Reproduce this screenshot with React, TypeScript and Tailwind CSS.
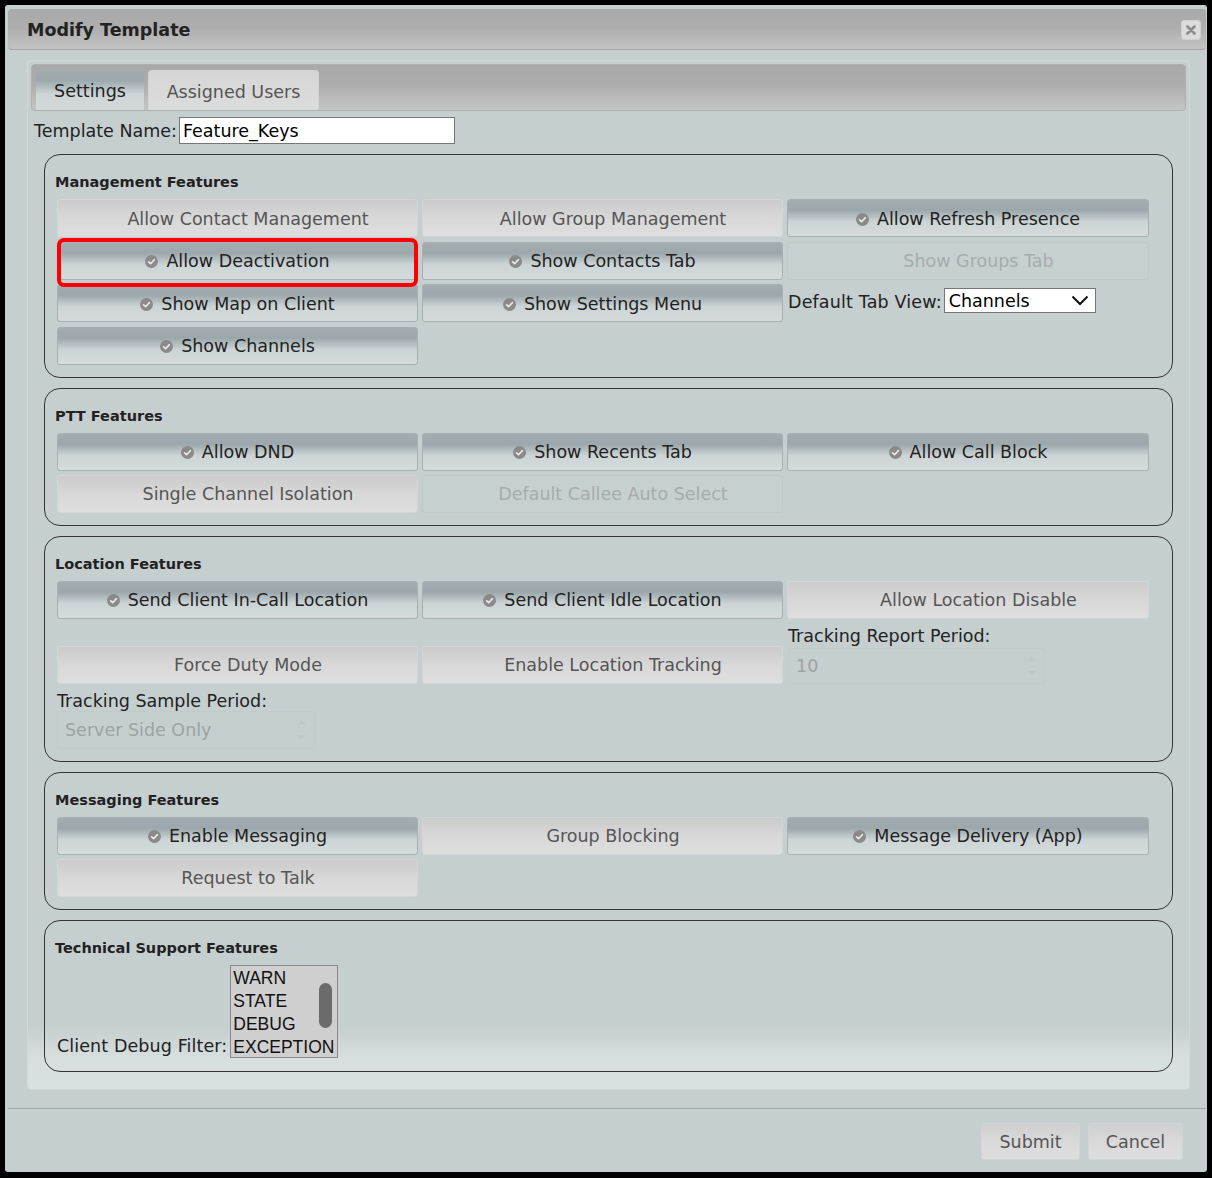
type Kind = 'on' | 'off' | 'disabled';

interface Feature {
    label: string;
    kind: Kind;
}

const FONT = "font-['DejaVu_Sans',Verdana,sans-serif]";

function CheckDot({ hidden }: { hidden?: boolean }) {
    return (
        <svg width="13" height="13" viewBox="0 0 13 13" className={`mr-[8px] shrink-0 ${hidden ? 'invisible' : ''}`}>
            <circle cx="6.5" cy="6.5" r="6.5" fill="#8a8a8a" />
            <path d="M3.6 6.8 L5.6 8.7 L9.4 4.6" stroke="#e8e8e8" strokeWidth="1.6" fill="none" strokeLinecap="round" strokeLinejoin="round" />
        </svg>
    );
}

function FeatureButton({ label, kind }: Feature) {
    const styles: Record<Kind, string> = {
        on: 'border-[#a7b0b2] bg-[linear-gradient(to_bottom,#a4aeb1_0%,#9ba7ab_28%,#ccd4d5_60%,#d5dbdc_100%)] text-[#222]',
        off: 'border-[#d2d6d6] bg-[linear-gradient(to_bottom,#cbcbcb_0%,#d9d9d9_55%,#dedede_100%)] text-[#555]',
        disabled: 'border-[#c0c9ca] bg-[#c7d0d1] text-[#a5acad]',
    };
    return (
        <div className={`h-[38px] rounded-[3px] border flex items-center justify-center pt-[2px] text-[17.5px] ${styles[kind]}`}>
            <CheckDot hidden={kind !== 'on'} />
            <span>{label}</span>
        </div>
    );
}

function Fieldset({ title, children }: { title: string; children: React.ReactNode }) {
    return (
        <div className="border border-[#333] rounded-[16px] pl-[12px] pt-[17px] pb-[12px]">
            <div className="text-[14.5px] leading-[20px] font-bold text-[#222] -ml-[2px] mb-[7px]">{title}</div>
            {children}
        </div>
    );
}

function Grid({ children, className = '' }: { children: React.ReactNode; className?: string }) {
    return <div className={`grid grid-cols-[361px_361px_362px] gap-x-[4px] ${className}`}>{children}</div>;
}

function Spinner({ value, width }: { value: string; width: string }) {
    return (
        <div className={`${width} h-full border border-[#c2cbcc] rounded-[2px] flex items-center justify-between pl-[7px] pr-[8px] text-[17.5px] text-[#9ca3a4]`}>
            <span className="pt-[2px]">{value}</span>
            <div className="flex flex-col gap-[10px]">
                <svg width="9" height="5" viewBox="0 0 9 5"><path d="M0 5 L4.5 0 L9 5Z" fill="#bfc7c8" /></svg>
                <svg width="9" height="5" viewBox="0 0 9 5"><path d="M0 0 L4.5 5 L9 0Z" fill="#bfc7c8" /></svg>
            </div>
        </div>
    );
}

export default function App() {
    const management: Feature[] = [
        { label: 'Allow Contact Management', kind: 'off' },
        { label: 'Allow Group Management', kind: 'off' },
        { label: 'Allow Refresh Presence', kind: 'on' },
    ];

    return (
        <div className={`w-[1212px] h-[1178px] bg-black pt-[5px] pl-[5px] pr-[5px] pb-[6px] ${FONT}`}>
            <div className="h-full bg-[#c6cfd0] rounded-[3px] flex flex-col">
                {/* Title bar */}
                <div className="ml-[3px] mr-[1px] mt-[4px] h-[41px] rounded-[4px] border-b border-[#a3a3a3] bg-[linear-gradient(to_bottom,#a9a9a9_0%,#adadad_45%,#c4c4c4_100%)] flex items-center justify-between pl-[19px] pr-[5px]">
                    <span className="pt-[3px] text-[17.5px] font-bold text-[#222]">Modify Template</span>
                    <div className="w-[20px] h-[20px] mt-[1px] rounded-[3px] border border-[#cfcfcf] bg-[#dcdcdc] flex items-center justify-center">
                        <svg width="10" height="10" viewBox="0 0 10 10">
                            <path d="M1.5 1.5 L8.5 8.5 M8.5 1.5 L1.5 8.5" stroke="#8a8a8a" strokeWidth="2.6" strokeLinecap="round" />
                        </svg>
                    </div>
                </div>

                {/* Panel */}
                <div className="ml-[22px] mr-[17px] mt-[10px] border border-[#d0d8d8] rounded-[4px] p-[3px] bg-[linear-gradient(to_bottom,#c6cfd0_0%,#c6cfd0_94%,#d7dede_97%,#d9e0e0_100%)]">
                    {/* Tabs */}
                    <div className="h-[47px] rounded-[4px] border border-[#b0b0b0] bg-[linear-gradient(to_bottom,#a9a9a9_0%,#acacac_40%,#c5c5c5_100%)] flex items-end gap-[4px] pl-[4px]">
                        <div className="w-[108px] h-[40px] pt-[3px] rounded-t-[4px] bg-[linear-gradient(to_bottom,#a2adb0_0%,#9ba7ab_25%,#cdd5d6_60%,#d4dadb_100%)] flex items-center justify-center text-[17.5px] text-[#222]">
                            Settings
                        </div>
                        <div className="w-[171px] h-[40px] pt-[3px] rounded-t-[4px] border border-[#d3d3d3] border-b-0 bg-[linear-gradient(to_bottom,#d6d6d6_0%,#dcdcdc_100%)] flex items-center justify-center text-[17.5px] text-[#555]">
                            Assigned Users
                        </div>
                    </div>

                    {/* Template name */}
                    <div className="mt-[6px] h-[27px] pl-[3px] flex items-center text-[17.5px] text-[#222]">
                        <span className="pt-[2px]">Template Name:</span>
                        <div className="ml-[2px] w-[276px] h-[27px] bg-white border border-[#767676] flex items-center pl-[3px] pt-[2px] text-black">
                            Feature_Keys
                        </div>
                    </div>

                    <div className="mx-[13px] mt-[10px] mb-[14px] flex flex-col gap-[10px] text-[#222]">
                        <Fieldset title="Management Features">
                            <Grid className="gap-y-[4.5px]">
                                {management.map((f) => (
                                    <FeatureButton key={f.label} {...f} />
                                ))}
                                <div className="relative">
                                    <FeatureButton label="Allow Deactivation" kind="on" />
                                    <div className="absolute -top-[4px] -bottom-[7px] left-0 right-0 border-[4px] border-[#ff0000] rounded-[7px] pointer-events-none" />
                                </div>
                                <FeatureButton label="Show Contacts Tab" kind="on" />
                                <FeatureButton label="Show Groups Tab" kind="disabled" />
                                <FeatureButton label="Show Map on Client" kind="on" />
                                <FeatureButton label="Show Settings Menu" kind="on" />
                                <div className="flex items-start pt-[4px] pl-[1px] text-[17.5px]">
                                    <span className="leading-[25px] pt-[2px] tracking-[0.15px]">Default Tab View:</span>
                                    <div className="ml-[2px] w-[152px] h-[25px] bg-white border border-[#767676] flex items-center justify-between pl-[4px] pr-[6px] pt-[1px] text-black">
                                        <span>Channels</span>
                                        <svg width="18" height="11" viewBox="0 0 18 11" className="mb-[1px]">
                                            <path d="M1.5 1.5 L9 9 L16.5 1.5" stroke="#111" strokeWidth="2" fill="none" />
                                        </svg>
                                    </div>
                                </div>
                                <FeatureButton label="Show Channels" kind="on" />
                            </Grid>
                        </Fieldset>

                        <Fieldset title="PTT Features">
                            <Grid className="gap-y-[4px]">
                                <FeatureButton label="Allow DND" kind="on" />
                                <FeatureButton label="Show Recents Tab" kind="on" />
                                <FeatureButton label="Allow Call Block" kind="on" />
                                <FeatureButton label="Single Channel Isolation" kind="off" />
                                <FeatureButton label="Default Callee Auto Select" kind="disabled" />
                            </Grid>
                        </Fieldset>

                        <Fieldset title="Location Features">
                            <Grid className="items-end gap-y-[5px]">
                                <FeatureButton label="Send Client In-Call Location" kind="on" />
                                <FeatureButton label="Send Client Idle Location" kind="on" />
                                <FeatureButton label="Allow Location Disable" kind="off" />
                                <FeatureButton label="Force Duty Mode" kind="off" />
                                <FeatureButton label="Enable Location Tracking" kind="off" />
                                <div className="flex flex-col pl-[1px] text-[17.5px]">
                                    <span className="leading-[20px] pt-[2px]">Tracking Report Period:</span>
                                    <div className="mt-[2px] h-[36px]">
                                        <Spinner value="10" width="w-[257px]" />
                                    </div>
                                </div>
                                <div className="flex flex-col text-[17.5px]">
                                    <span className="leading-[20px] pt-[2px]">Tracking Sample Period:</span>
                                    <div className="h-[38px]">
                                        <Spinner value="Server Side Only" width="w-[258px]" />
                                    </div>
                                </div>
                            </Grid>
                        </Fieldset>

                        <Fieldset title="Messaging Features">
                            <Grid className="gap-y-[4px]">
                                <FeatureButton label="Enable Messaging" kind="on" />
                                <FeatureButton label="Group Blocking" kind="off" />
                                <FeatureButton label="Message Delivery (App)" kind="on" />
                                <FeatureButton label="Request to Talk" kind="off" />
                            </Grid>
                        </Fieldset>

                        <Fieldset title="Technical Support Features">
                            <div className="flex items-end pb-[1px]">
                                <span className="text-[17.5px] leading-[20px] mb-[2px] tracking-[0.1px]">Client Debug Filter:</span>
                                <div className="relative ml-[3px] w-[108px] h-[93px] border border-[#8a8a8a] bg-[#cfcfcf] pl-[2px] pt-[1px] font-['Liberation_Sans',Arial,sans-serif] text-[17.5px] leading-[23px] text-[#111] overflow-hidden">
                                    <div>WARN</div>
                                    <div>STATE</div>
                                    <div>DEBUG</div>
                                    <div>EXCEPTION</div>
                                    <div className="absolute right-[5px] top-[17px] w-[13px] h-[45px] rounded-full bg-[#6b6b6b]" />
                                </div>
                            </div>
                        </Fieldset>
                    </div>
                </div>

                {/* Footer */}
                <div className="ml-[3px] mr-[1px] mt-[18px] border-t border-[#9fa7a8] flex justify-end gap-[8px] pt-[14px] pr-[23px]">
                    <div className="w-[99px] h-[37px] pt-[2px] rounded-[3px] border border-[#d2d6d6] bg-[linear-gradient(to_bottom,#cfcfcf_0%,#dadada_55%,#dedede_100%)] flex items-center justify-center text-[17.5px] text-[#555]">
                        Submit
                    </div>
                    <div className="w-[95px] h-[37px] pt-[2px] rounded-[3px] border border-[#d2d6d6] bg-[linear-gradient(to_bottom,#cfcfcf_0%,#dadada_55%,#dedede_100%)] flex items-center justify-center text-[17.5px] text-[#555]">
                        Cancel
                    </div>
                </div>
            </div>
        </div>
    );
}
